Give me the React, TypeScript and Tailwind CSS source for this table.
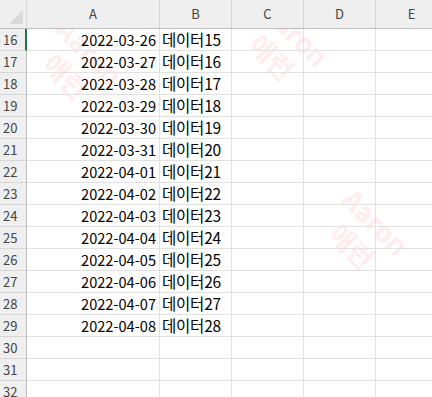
import React from "react";

const rows = [
  [16, "2022-03-26", "데이터15"],
  [17, "2022-03-27", "데이터16"],
  [18, "2022-03-28", "데이터17"],
  [19, "2022-03-29", "데이터18"],
  [20, "2022-03-30", "데이터19"],
  [21, "2022-03-31", "데이터20"],
  [22, "2022-04-01", "데이터21"],
  [23, "2022-04-02", "데이터22"],
  [24, "2022-04-03", "데이터23"],
  [25, "2022-04-04", "데이터24"],
  [26, "2022-04-05", "데이터25"],
  [27, "2022-04-06", "데이터26"],
  [28, "2022-04-07", "데이터27"],
  [29, "2022-04-08", "데이터28"],
  [30, "", ""],
  [31, "", ""],
  [32, "", ""],
] as const;

const font = { fontFamily: '"Noto Sans CJK KR", "Noto Sans", sans-serif' };

function Watermark({ className }: { className: string }) {
  return (
    <div
      className={`absolute -translate-x-1/2 -translate-y-1/2 rotate-45 flex flex-col items-center font-bold text-[27px] leading-[34px] text-[#ffeded] whitespace-nowrap pointer-events-none ${className}`}
    >
      <span>Aaron</span>
      <span>애런</span>
    </div>
  );
}

export default function App() {
  return (
    <div className="relative w-[432px] h-[397px] overflow-hidden bg-white" style={font}>
      <Watermark className="left-[78px] top-[64px]" />
      <Watermark className="left-[284px] top-[45px]" />
      <Watermark className="left-[364px] top-[234px]" />
      <div className="relative flex flex-col">
        {/* header */}
        <div className="flex h-[29px] bg-[#efefef] border-b border-[#bdbdbd] text-[13px] text-[#444]">
          <div className="relative w-[27px] shrink-0 border-r border-[#d6d6d6]">
            <div className="absolute right-[3px] bottom-[4px] w-0 h-0 border-l-[14px] border-l-transparent border-b-[14px] border-b-[#d9d9d9]" />
          </div>
          <div className="w-[133px] shrink-0 border-r border-[#d6d6d6] flex items-center justify-center">A</div>
          <div className="w-[72px] shrink-0 border-r border-[#d6d6d6] flex items-center justify-center">B</div>
          <div className="w-[72px] shrink-0 border-r border-[#d6d6d6] flex items-center justify-center">C</div>
          <div className="w-[72px] shrink-0 border-r border-[#d6d6d6] flex items-center justify-center">D</div>
          <div className="w-[72px] shrink-0 border-r border-[#d6d6d6] flex items-center justify-center">E</div>
        </div>
        {rows.map(([n, a, b]) => (
          <div key={n} className="flex h-[22px]">
            <div
              className={`w-[27px] shrink-0 bg-[#efefef] border-b border-[#d6d6d6] flex items-center pl-[3px] text-[13px] text-[#444] ${
                n === 16 ? "border-r-2 border-r-[#217346]" : "border-r border-r-[#bdbdbd]"
              }`}
            >
              {n}
            </div>
            <div className="w-[133px] shrink-0 border-r border-b border-[#e1e1e1] flex items-center justify-end pr-[3px] text-[14.6px] text-black">
              {a}
            </div>
            <div className="w-[72px] shrink-0 border-r border-b border-[#e1e1e1] flex items-center pl-[2px] text-[15.5px] tracking-[-0.2px] text-black whitespace-nowrap overflow-hidden">
              {b}
            </div>
            <div className="w-[72px] shrink-0 border-r border-b border-[#e1e1e1]" />
            <div className="w-[72px] shrink-0 border-r border-b border-[#e1e1e1]" />
            <div className="w-[72px] shrink-0 border-r border-b border-[#e1e1e1]" />
          </div>
        ))}
      </div>
    </div>
  );
}
